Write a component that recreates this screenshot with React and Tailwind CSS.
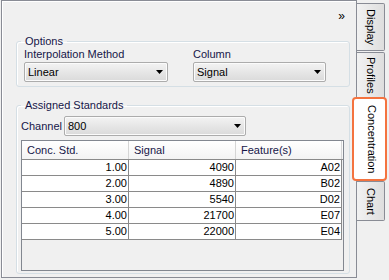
function Combo({ value, className }) {
  return (
    <div
      className={`flex h-[20px] items-center justify-between rounded-[2px] border border-[#acacac] bg-linear-to-b from-[#f3f3f3] to-[#dadada] pl-[3px] pr-[4px] text-black shadow-[inset_0_0_0_1px_#fbfbfb] ${className}`}
    >
      <span>{value}</span>
      <svg width="7" height="4" viewBox="0 0 7 4">
        <path d="M0 0h7L3.5 4z" fill="#000" />
      </svg>
    </div>
  )
}

function Tab({ label, className }) {
  return (
    <div
      className={`flex w-[28px] items-center justify-center rounded-r-[2px] border border-l-0 border-[#898c95] bg-linear-to-r from-[#f2f2f2] to-[#dedede] text-black ${className}`}
    >
      <span className="[writing-mode:vertical-rl]">{label}</span>
    </div>
  )
}

const rows = [
  ['1.00', '4090', 'A02'],
  ['2.00', '4890', 'B02'],
  ['3.00', '5540', 'D02'],
  ['4.00', '21700', 'E07'],
  ['5.00', '22000', 'E04'],
]

export default function App() {
  return (
    <div className="flex h-[280px] w-[389px] bg-[#f0f0f0] pl-[1px] font-['Liberation_Sans',Arial,sans-serif] text-[11px] leading-[13px] text-[#161648]">
      <div className="flex h-[278px] w-[356px] flex-col border border-[#898c95] shadow-[inset_1px_1px_0_#fff]">
        <div className="flex h-[34px] justify-end pr-[11px] pt-[9px] text-[12px] text-black">»</div>

        <fieldset className="ml-[14px] mr-[6px] rounded-[3px] border border-[#d5dfe5] px-[4px] pb-[4px] shadow-[inset_1px_1px_0_#fff]">
          <legend className="px-[4px]">Options</legend>
          <div className="flex pl-[3px]">
            <div className="flex flex-col">
              <span>Interpolation Method</span>
              <Combo value="Linear" className="mt-[1px] w-[144px]" />
            </div>
            <div className="ml-[25px] flex flex-col">
              <span>Column</span>
              <Combo value="Signal" className="mt-[1px] w-[133px]" />
            </div>
          </div>
        </fieldset>

        <fieldset className="ml-[14px] mr-[6px] mt-[12px] rounded-[3px] border border-[#d5dfe5] px-[4px] pb-[2px] shadow-[inset_1px_1px_0_#fff]">
          <legend className="px-[4px]">Assigned Standards</legend>
          <div className="mt-[4px] flex items-center">
            <span className="w-[43px]">Channel</span>
            <Combo value="800" className="w-[182px]" />
          </div>
          <div className="mt-[4px] h-[131px] w-[323px] border border-[#828790] bg-[#f0f0f0]">
            <div className="flex h-[19px] border-b border-[#8a8a8a] bg-linear-to-b from-white to-[#f3f3f3]">
              <div className="flex w-[107px] items-center border-r border-[#d5d5d5] pl-[5px]">Conc. Std.</div>
              <div className="flex w-[107px] items-center border-r border-[#d5d5d5] pl-[5px]">Signal</div>
              <div className="flex w-[106px] items-center border-r border-[#d5d5d5] pl-[5px]">Feature(s)</div>
            </div>
            {rows.map((r) => (
              <div key={r[0]} className="flex h-[16px] w-[320px] border-b border-[#8a8a8a] bg-white text-black">
                <div className="flex w-[107px] items-center justify-end border-r border-[#8a8a8a] pr-[1px]">{r[0]}</div>
                <div className="flex w-[107px] items-center justify-end border-r border-[#8a8a8a] pr-[1px]">{r[1]}</div>
                <div className="flex w-[106px] items-center justify-end border-r border-[#8a8a8a] pr-[1px]">{r[2]}</div>
              </div>
            ))}
          </div>
        </fieldset>
      </div>

      <div className="flex flex-col pt-[3px]">
        <Tab label="Display" className="h-[48px]" />
        <Tab label="Profiles" className="mt-[1px] h-[47px]" />
        <div className="relative z-10 -ml-[5px] -mt-[2px] flex h-[84px] w-[35px] items-center justify-center rounded-[4px] border-2 border-[#f4733f] bg-white pl-[3px] text-black">
          <span className="[writing-mode:vertical-rl]">Concentration</span>
        </div>
        <Tab label="Chart" className="h-[40px]" />
      </div>
    </div>
  )
}
